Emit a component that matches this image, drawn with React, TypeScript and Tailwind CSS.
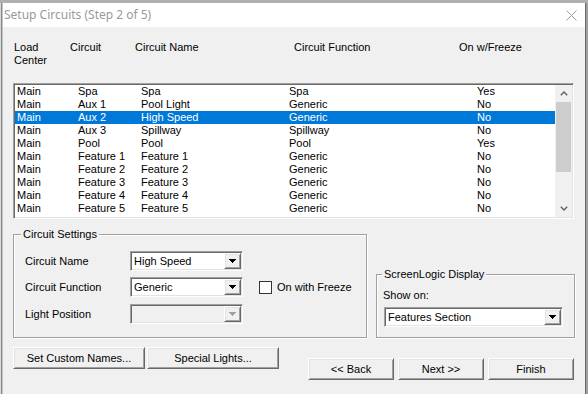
import React from "react";

const rows: string[][] = [
  ["Main", "Spa", "Spa", "Spa", "Yes"],
  ["Main", "Aux 1", "Pool Light", "Generic", "No"],
  ["Main", "Aux 2", "High Speed", "Generic", "No"],
  ["Main", "Aux 3", "Spillway", "Spillway", "No"],
  ["Main", "Pool", "Pool", "Pool", "Yes"],
  ["Main", "Feature 1", "Feature 1", "Generic", "No"],
  ["Main", "Feature 2", "Feature 2", "Generic", "No"],
  ["Main", "Feature 3", "Feature 3", "Generic", "No"],
  ["Main", "Feature 4", "Feature 4", "Generic", "No"],
  ["Main", "Feature 5", "Feature 5", "Generic", "No"],
  ["Main", "Feature 6", "Feature 6", "Generic", "No"],
];

const sunken =
  "border border-t-[#a0a0a0] border-l-[#a0a0a0] border-r-white border-b-white shadow-[inset_1px_1px_0_#696969,inset_-1px_-1px_0_#e3e3e3]";
const raised =
  "border border-t-white border-l-white border-r-[#696969] border-b-[#696969] shadow-[inset_1px_1px_0_#e3e3e3,inset_-1px_-1px_0_#a0a0a0]";

function Arrow({ color = "#000" }: { color?: string }) {
  return (
    <svg width="7" height="4" viewBox="0 0 7 4" shapeRendering="crispEdges">
      <rect x="0" y="0" width="7" height="1" fill={color} />
      <rect x="1" y="1" width="5" height="1" fill={color} />
      <rect x="2" y="2" width="3" height="1" fill={color} />
      <rect x="3" y="3" width="1" height="1" fill={color} />
    </svg>
  );
}

function Combo({
  value,
  width,
  disabled,
}: {
  value: string;
  width: string;
  disabled?: boolean;
}) {
  return (
    <div
      className={`${width} h-[20px] p-px flex ${sunken} ${
        disabled ? "bg-[#f0f0f0]" : "bg-white"
      }`}
    >
      <div className="flex-1 pl-[2px] flex items-center whitespace-nowrap">{value}</div>
      <div
        className={`w-[17px] h-[16px] flex items-center justify-center bg-[#f0f0f0] ${raised}`}
      >
        <Arrow color={disabled ? "#a0a0a0" : "#000"} />
      </div>
    </div>
  );
}

function Button({ label, width }: { label: string; width: string }) {
  return (
    <div
      className={`${width} h-[22px] flex items-center justify-center bg-[#f0f0f0] ${raised}`}
    >
      {label}
    </div>
  );
}

function Chevron({ up }: { up?: boolean }) {
  return (
    <svg width="8" height="5" viewBox="0 0 8 5">
      <path
        d={up ? "M0.8 4.2 L4 1 L7.2 4.2" : "M0.8 0.8 L4 4 L7.2 0.8"}
        stroke="#606060"
        strokeWidth="1.4"
        fill="none"
      />
    </svg>
  );
}

export default function App() {
  return (
    <div className="w-[588px] h-[394px] overflow-hidden flex flex-col bg-[#ababab] font-['Liberation_Sans',Arial,sans-serif] text-[11px] leading-[13px] text-black">
      <div className="h-[3px] bg-[#b0b0b0]" />
      <div className="flex flex-1">
        <div className="w-[3px] border-l border-l-[#d8d8d8] border-r border-r-[#c4c4c4] bg-[#8a8a8a]" />
        <div className="w-[582px] flex flex-col bg-[#f0f0f0]">
          {/* title bar */}
          <div className="h-[24px] bg-white flex items-center justify-between pl-[1px] pr-[8px]">
            <span className="font-['Noto_Sans',sans-serif] text-[12px] text-[#999999] leading-[16px]">
              Setup Circuits (Step 2 of 5)
            </span>
            <svg width="11" height="11" viewBox="0 0 11 11">
              <path d="M0.5 0.5 L10.5 10.5 M10.5 0.5 L0.5 10.5" stroke="#9a9a9a" strokeWidth="1" />
            </svg>
          </div>

          {/* body */}
          <div className="flex flex-col pl-[10px]">
            <div className="mt-[14px] flex">
              <div className="ml-[1px] w-[56px]">
                Load
                <br />
                Center
              </div>
              <div className="w-[65px]">Circuit</div>
              <div className="w-[159px]">Circuit Name</div>
              <div className="w-[165px]">Circuit Function</div>
              <div>On w/Freeze</div>
            </div>

            {/* list */}
            <div className={`mt-[16px] w-[561px] h-[136px] p-px bg-white flex ${sunken}`}>
              <div className="w-[540px] overflow-hidden">
                {rows.map((r, i) => (
                  <div
                    key={i}
                    className={`h-[13px] flex whitespace-nowrap ${
                      i === 2 ? "bg-[#0078d7] text-white" : ""
                    }`}
                  >
                    <div className="w-[63px] pl-[2px]">{r[0]}</div>
                    <div className="w-[63px]">{r[1]}</div>
                    <div className="w-[148px]">{r[2]}</div>
                    <div className="w-[188px]">{r[3]}</div>
                    <div>{r[4]}</div>
                  </div>
                ))}
              </div>
              <div className="w-[17px] bg-[#f0f0f0] flex flex-col">
                <div className="h-[17px] flex items-center justify-center">
                  <Chevron up />
                </div>
                <div className="h-[70px] mx-px bg-[#cdcdcd]" />
                <div className="flex-1" />
                <div className="h-[17px] flex items-center justify-center">
                  <Chevron />
                </div>
              </div>
            </div>

            {/* settings */}
            <div className="mt-[9px] flex items-end gap-[9px]">
              <fieldset className="w-[354px] h-[110px] border border-[#a0a0a0] shadow-[inset_1px_1px_0_white,1px_1px_0_white]">
                <legend className="ml-[7px] px-[2px] bg-[#f0f0f0]">Circuit Settings</legend>
                <div className="pl-[11px] flex flex-col">
                  <div className="mt-[10px] flex items-center">
                    <div className="w-[105px]">Circuit Name</div>
                    <Combo value="High Speed" width="w-[113px]" />
                  </div>
                  <div className="mt-[6px] flex items-center">
                    <div className="w-[105px]">Circuit Function</div>
                    <Combo value="Generic" width="w-[113px]" />
                    <div className="ml-[16px] w-[13px] h-[13px] border border-[#333333] bg-white" />
                    <div className="ml-[5px]">On with Freeze</div>
                  </div>
                  <div className="mt-[7px] flex items-center">
                    <div className="w-[105px]">Light Position</div>
                    <Combo value="" width="w-[113px]" disabled />
                  </div>
                </div>
              </fieldset>

              <fieldset className="w-[199px] h-[70px] border border-[#a0a0a0] shadow-[inset_1px_1px_0_white,1px_1px_0_white]">
                <legend className="ml-[5px] px-[2px] bg-[#f0f0f0]">ScreenLogic Display</legend>
                <div className="pl-[6px] flex flex-col">
                  <div className="mt-[8px]">Show on:</div>
                  <div className="mt-[5px] ml-px">
                    <Combo value="Features Section" width="w-[179px]" />
                  </div>
                </div>
              </fieldset>
            </div>

            {/* buttons */}
            <div className="mt-[9px] flex items-start w-[561px]">
              <div className="flex gap-[2px]">
                <Button label="Set Custom Names..." width="w-[132px]" />
                <Button label="Special Lights..." width="w-[132px]" />
              </div>
              <div className="ml-auto mt-[11px] flex gap-[4px]">
                <Button label="<< Back" width="w-[86px]" />
                <Button label="Next >>" width="w-[86px]" />
                <Button label="Finish" width="w-[86px]" />
              </div>
            </div>
          </div>
        </div>
        <div className="w-[3px] bg-[#a0a0a0] border-l border-l-[#6a6a6a]" />
      </div>
    </div>
  );
}
